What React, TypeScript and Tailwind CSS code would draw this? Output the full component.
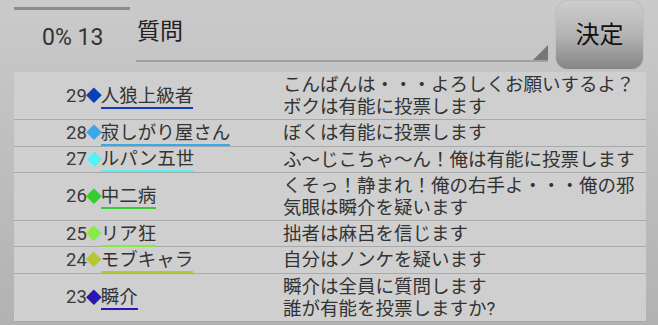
import React from "react";

type Post = {
  no: number;
  name: string;
  color: string;
  lines: string[];
};

const POSTS: Post[] = [
  {
    no: 29,
    name: "人狼上級者",
    color: "#0f3db8",
    lines: ["こんばんは・・・よろしくお願いするよ？", "ボクは有能に投票します"],
  },
  { no: 28, name: "寂しがり屋さん", color: "#3aa8e8", lines: ["ぼくは有能に投票します"] },
  { no: 27, name: "ルパン五世", color: "#55f2f2", lines: ["ふ〜じこちゃ〜ん！俺は有能に投票します"] },
  {
    no: 26,
    name: "中二病",
    color: "#33cc33",
    lines: ["くそっ！静まれ！俺の右手よ・・・俺の邪", "気眼は瞬介を疑います"],
  },
  { no: 25, name: "リア狂", color: "#88e844", lines: ["拙者は麻呂を信じます"] },
  { no: 24, name: "モブキャラ", color: "#b5c832", lines: ["自分はノンケを疑います"] },
  {
    no: 23,
    name: "瞬介",
    color: "#2a16b0",
    lines: ["瞬介は全員に質問します", "誰が有能を投票しますか?"],
  },
];

const FONT = "font-['Roboto','Noto_Sans_CJK_JP',sans-serif]";

const Row = ({ post }: { post: Post }) => (
  <div className="flex border-b border-[#a9a9a9] pt-[2px] pb-[1.3px] leading-[22px]">
    <div className="w-[269px] shrink-0 flex items-center pl-[52px]">
      <span className="text-[#3a3a3a] leading-[21px]">{post.no}</span>
      <span className="text-[16px] leading-[16px] -mx-[1px]" style={{ color: post.color }}>
        ◆
      </span>
      <span
        className="leading-[21px] text-[#333] border-b-2 -mb-[2px]"
        style={{ borderColor: post.color }}
      >
        {post.name}
      </span>
    </div>
    <div className="flex flex-col text-[#333]">
      {post.lines.map((line, i) => (
        <div key={i} className="h-[22px] whitespace-nowrap">
          {line}
        </div>
      ))}
    </div>
  </div>
);

const App = () => {
  return (
    <div
      className={`w-[658px] h-[325px] overflow-hidden bg-gradient-to-b from-[#cacaca] to-[#b2b2b2] ${FONT}`}
    >
      <div className="flex h-[72px]">
        <div className="w-[136px] shrink-0 pl-[14px] pt-[7px]">
          <div className="w-[116px] h-[3px] bg-[#8c8c8c]" />
          <div className="pl-[28px] pt-[15px] text-[23px] leading-[26px] text-[#333]">0% 13</div>
        </div>
        <div className="relative w-[412px] h-[62px] border-b-2 border-[#a0a0a0]">
          <div className="pt-[17px] pl-[1px] text-[23px] leading-[30px] text-[#222]">質問</div>
          <div className="absolute right-0 bottom-0 w-0 h-0 border-l-[15px] border-l-transparent border-b-[15px] border-b-[#777]" />
        </div>
        <div className="ml-[8px] mt-[1px] w-[87px] h-[68px] rounded-[12px] bg-gradient-to-b from-[#cdcdcd] via-[#b4b4b4] to-[#858585] flex items-center justify-center text-[24px] text-[#111] shadow-[0_0_1px_#777]">
          決定
        </div>
      </div>
      <div className="ml-[14px] w-[632px] bg-[#cfcfcf] text-[18.5px]">
        {POSTS.map((p) => (
          <Row key={p.no} post={p} />
        ))}
      </div>
    </div>
  );
};

export default App;
